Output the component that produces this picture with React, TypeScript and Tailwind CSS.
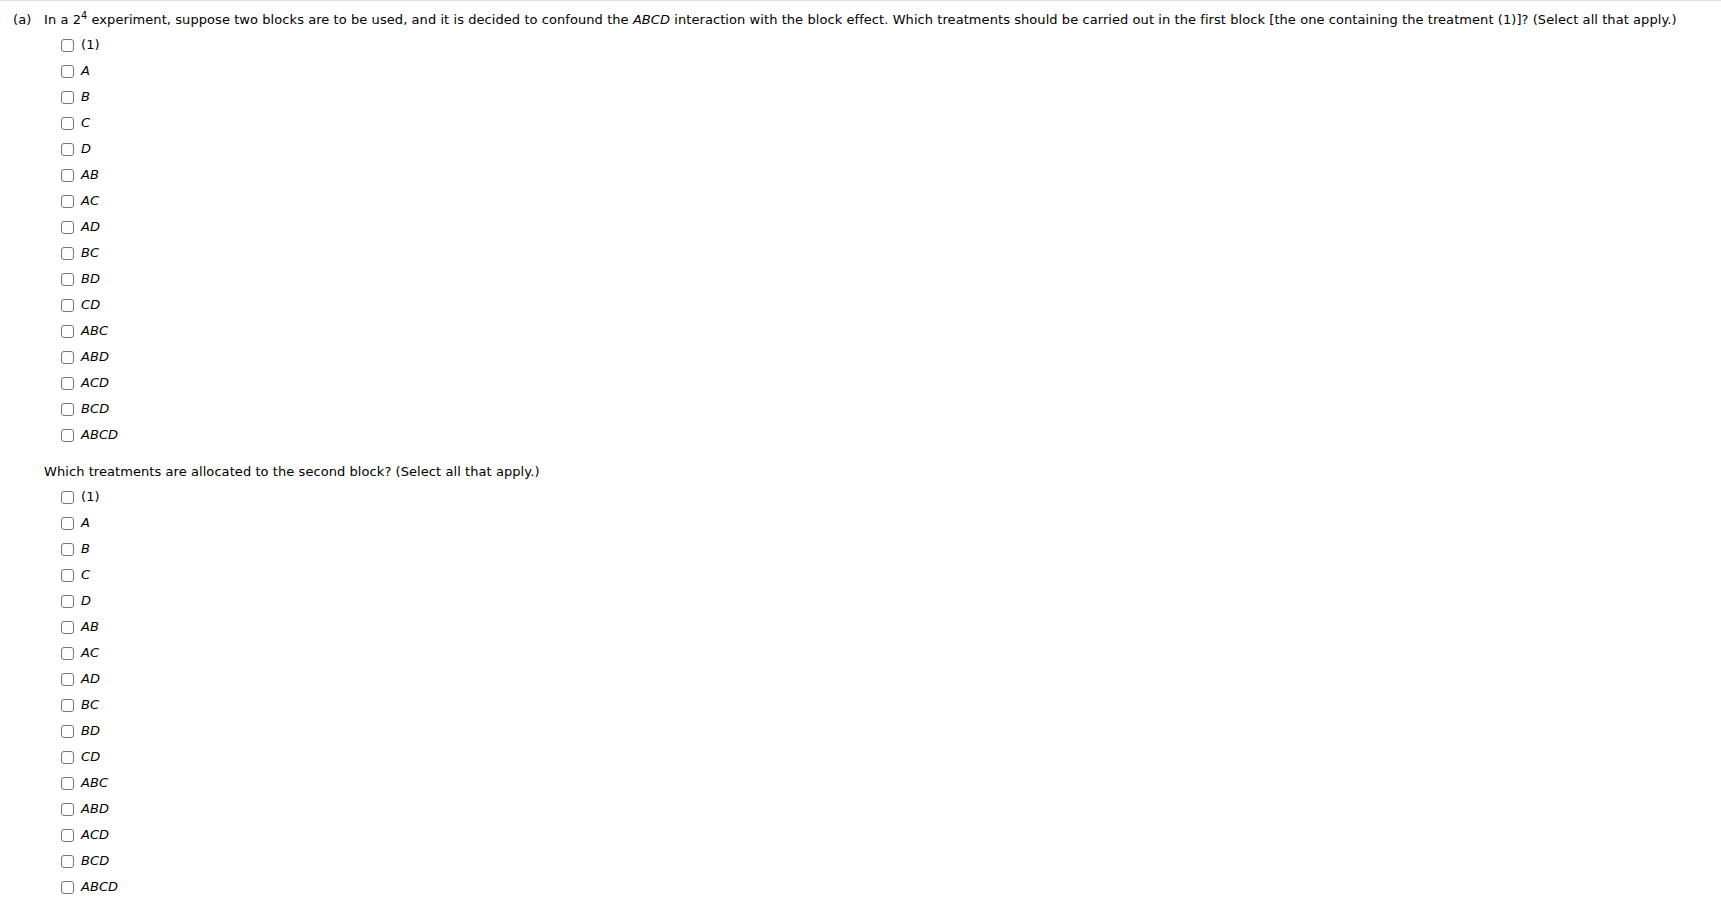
const options = ["(1)", "A", "B", "C", "D", "AB", "AC", "AD", "BC", "BD", "CD", "ABC", "ABD", "ACD", "BCD", "ABCD"];

const OptionList = ({ name }: { name: string }) => {
  return (
    <ul className="pl-[17px]">
      {options.map((opt) => (
        <li key={opt} className="h-[26px] flex items-center">
          <label className="flex items-center gap-[7px]">
            <input
              type="checkbox"
              name={name}
              className="appearance-none w-[13px] h-[13px] m-0 border border-[#767676] rounded-[3px] bg-white"
            />
            <span className={opt === "(1)" ? "" : "italic"}>{opt}</span>
          </label>
        </li>
      ))}
    </ul>
  );
};

export default function App() {
  return (
    <div
      className="min-h-screen bg-white text-[13px] leading-[20px] tracking-[0.07px] text-black border-t border-[#e2e2e2]"
      style={{ fontFamily: '"DejaVu Sans", Verdana, sans-serif' }}
    >
      <div className="flex pt-[9px] pl-[13px]">
        <span className="w-[31px] shrink-0">(a)</span>
        <div>
          <p className="whitespace-nowrap">
            In a 2<sup>4</sup> experiment, suppose two blocks are to be used, and it is decided to confound the{" "}
            <i>ABCD</i> interaction with the block effect. Which treatments should be carried out in the first
            block [the one containing the treatment (1)]? (Select all that apply.)
          </p>
          <div className="mt-[2px]">
            <OptionList name="first" />
          </div>
          <p className="mt-[14px]">Which treatments are allocated to the second block? (Select all that apply.)</p>
          <div className="mt-[2px]">
            <OptionList name="second" />
          </div>
        </div>
      </div>
    </div>
  );
}
